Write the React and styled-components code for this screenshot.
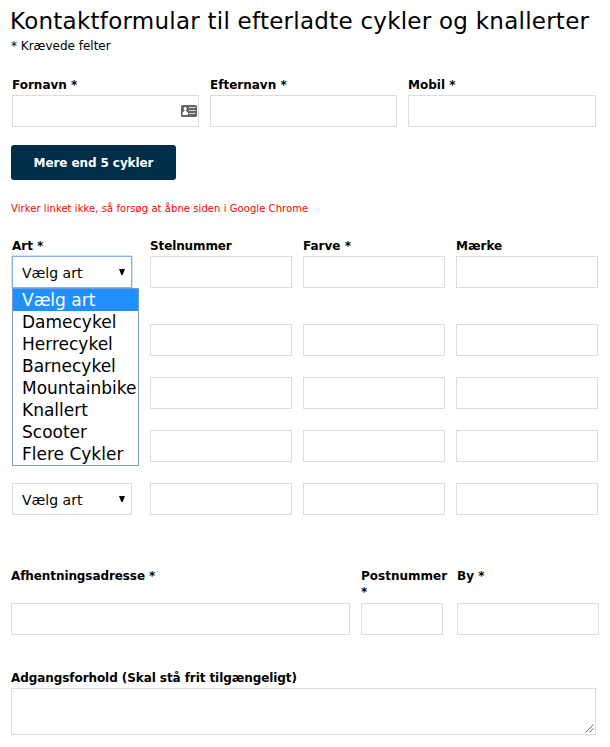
import React from "react";
import styled, { createGlobalStyle } from "styled-components";

const GlobalStyle = createGlobalStyle`
  *, *::before, *::after { box-sizing: border-box; }
  body { margin: 0; background: #fff; color: #000; font: 12px/16px "DejaVu Sans", Verdana, sans-serif; }
`;

const Form = styled.form`
  width: 610px;
  height: 747px;
  padding: 7px 11px 0;
  display: flex;
  flex-direction: column;
  overflow: hidden;
`;

const Title = styled.h1`
  margin: 0 0 3px -1px;
  font-size: 23px;
  line-height: 28px;
  font-weight: 400;
  letter-spacing: 0.25px;
  white-space: nowrap;
`;

const Required = styled.p`
  margin: 0 0 23px;
`;

const NameRow = styled.div`
  display: grid;
  grid-template-columns: 187px 187px 188px;
  column-gap: 11px;
  margin-left: 1px;
`;

const Field = styled.div`
  display: flex;
  flex-direction: column;
  min-width: 0;
`;

const Label = styled.label`
  height: ${(p) => (p.$tall ? 35 : 18)}px;
  font-weight: 700;
  letter-spacing: ${(p) => p.$spacing || 0}px;
  white-space: ${(p) => (p.$tall ? "normal" : "nowrap")};
`;

const Box = styled.div`
  display: flex;
  align-items: center;
  justify-content: flex-end;
  height: 32px;
  padding-right: 1px;
  border: 1px solid #dcdcdc;
  background: #fff;
`;

const Input = styled.input`
  flex: 1;
  min-width: 0;
  height: 100%;
  padding: 0 8px;
  border: 0;
  outline: 0;
  background: transparent;
  font: inherit;
`;

const Button = styled.button`
  width: 165px;
  height: 35px;
  margin: 18px 0 22px;
  padding: 0;
  border: 0;
  border-radius: 3px;
  background: #002d47;
  color: #fff;
  font: 700 12px/16px "DejaVu Sans", Verdana, sans-serif;
  letter-spacing: -0.09px;
`;

const Warning = styled.p`
  margin: 0 0 23px;
  color: #f00;
  font-size: 10px;
  line-height: 13px;
  letter-spacing: 0.061px;
`;

const BikeTable = styled.div`
  display: flex;
  flex-direction: column;
  gap: 21px;
  margin-left: 1px;
`;

const BikeRow = styled.div`
  display: grid;
  grid-template-columns: 127px 142px 142px 142px;
  column-gap: 11px;
  margin-bottom: ${(p) => (p.$first ? 15 : 0)}px;
`;

const SelectWrap = styled.div`
  position: relative;
  height: 32px;
`;

const Select = styled.div`
  display: flex;
  align-items: center;
  justify-content: space-between;
  width: 120px;
  height: 32px;
  padding: 2px 6px 0 9px;
  border: 1px solid ${(p) => (p.$open ? "#84adf2" : "#dcdcdc")};
  box-shadow: ${(p) => (p.$open ? "0 0 0 0.5px #a5c4fa" : "none")};
  background: #fff;
  font-size: 14px;

  & > svg { margin-bottom: 3px; }
`;

const Menu = styled.ul`
  position: absolute;
  z-index: 1;
  top: 32px;
  left: 0;
  width: 127px;
  margin: 0;
  padding: 0;
  border: 1px solid #7a9bd0;
  background: #fff;
  list-style: none;
`;

const Option = styled.li`
  height: 22px;
  padding-left: 9px;
  background: ${(p) => (p.$active ? "#1e90ff" : "#fff")};
  color: ${(p) => (p.$active ? "#fff" : "#000")};
  font-size: 17px;
  line-height: 22px;
  white-space: nowrap;
`;

const AddressRow = styled.div`
  display: grid;
  grid-template-columns: 339px 85px 142px;
  column-gap: 11px;
  margin: 53px -1px 35px 0;
`;

const Textarea = styled.div`
  display: flex;
  align-items: flex-end;
  justify-content: flex-end;
  width: 585px;
  height: 47px;
  padding: 0 1px 1px 0;
  border: 1px solid #dcdcdc;
`;

const Arrow = () => (
  <svg width="6" height="6" viewBox="0 0 6 6">
    <path d="M0 0h6L3.6 6H2.4z" fill="#000" />
  </svg>
);

const ContactIcon = () => (
  <svg width="16" height="12" viewBox="0 0 16 12">
    <rect width="16" height="12" rx="1.6" fill="#646464" />
    <circle cx="4.2" cy="3.5" r="1.5" fill="#fff" />
    <path d="M3.5 4h1.4v2l2 1.3V10H1.6V7.3l1.9-1.3z" fill="#fff" />
    <path d="M8 2.5h6.5M8 5.5h6.500M8 8.5h6.5" stroke="#d8d8d8" />
  </svg>
);

const Grip = () => (
  <svg width="9" height="9" viewBox="0 0 9 9" fill="none" stroke="#555" strokeWidth="0.9">
    <path d="M0.5 8.5l8-8M4.5 8.5l4-4" />
  </svg>
);

const kinds = ["Vælg art", "Damecykel", "Herrecykel", "Barnecykel", "Mountainbike", "Knallert", "Scooter", "Flere Cykler"];

const PostField = styled.div`
  width: 82px;
`;

function TextField({ label, spacing, tall, icon }) {
  return (
    <Field>
      {label && <Label $spacing={spacing} $tall={tall}>{label}</Label>}
      <Box>
        <Input aria-label={label || "Cykel"} />
        {icon}
      </Box>
    </Field>
  );
}

function KindSelect({ open }) {
  return (
    <SelectWrap>
      <Select $open={open}>
        Vælg art
        <Arrow />
      </Select>
      {open && (
        <Menu>
          {kinds.map((kind, i) => (
            <Option key={kind} $active={i === 0}>{kind}</Option>
          ))}
        </Menu>
      )}
    </SelectWrap>
  );
}

export default function App() {
  return (
    <>
      <GlobalStyle />
      <Form>
        <Title>Kontaktformular til efterladte cykler og knallerter</Title>
        <Required>* Krævede felter</Required>
        <NameRow>
          <TextField label="Fornavn *" icon={<ContactIcon />} />
          <TextField label="Efternavn *" />
          <TextField label="Mobil *" />
        </NameRow>
        <Button type="button">Mere end 5 cykler</Button>
        <Warning>Virker linket ikke, så forsøg at åbne siden i Google Chrome</Warning>
        <BikeTable>
          <BikeRow $first>
            <Field>
              <Label>Art *</Label>
              <KindSelect open />
            </Field>
            <TextField label="Stelnummer" spacing={-0.12} />
            <TextField label="Farve *" />
            <TextField label="Mærke" />
          </BikeRow>
          {/* The open menu covers the select column of rows 2 to 4. */}
          {[2, 3, 4, 5].map((row) => (
            <BikeRow key={row}>
              {row === 5 ? <KindSelect /> : <SelectWrap />}
              <TextField />
              <TextField />
              <TextField />
            </BikeRow>
          ))}
        </BikeTable>
        <AddressRow>
          <TextField tall label="Afhentningsadresse *" spacing={-0.09} />
          <PostField>
            <TextField tall label="Postnummer *" />
          </PostField>
          <TextField tall label="By *" />
        </AddressRow>
        <Label $spacing={-0.075}>Adgangsforhold (Skal stå frit tilgængeligt)</Label>
        <Textarea>
          <Grip />
        </Textarea>
      </Form>
    </>
  );
}
